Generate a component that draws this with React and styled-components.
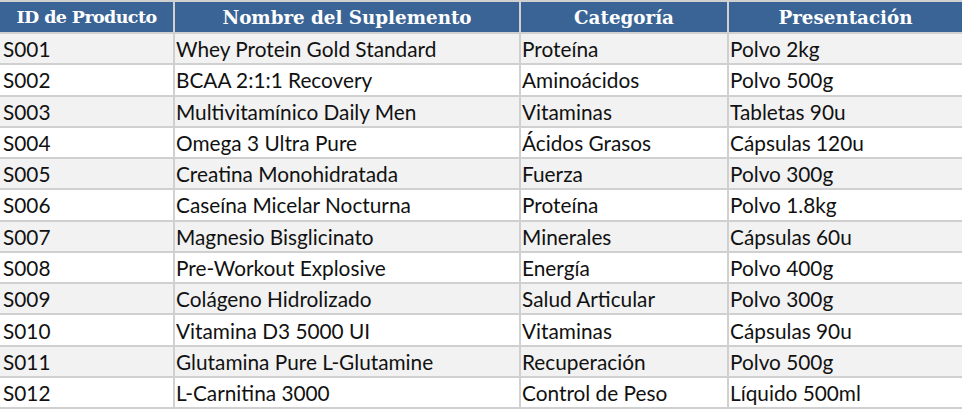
import React from 'react';
import styled, { createGlobalStyle } from 'styled-components';

const GlobalStyle = createGlobalStyle`
  body {
    margin: 0;
    background: #ffffff;
  }
`;

const products = [
  ['S001', 'Whey Protein Gold Standard', 'Proteína', 'Polvo 2kg'],
  ['S002', 'BCAA 2:1:1 Recovery', 'Aminoácidos', 'Polvo 500g'],
  ['S003', 'Multivitamínico Daily Men', 'Vitaminas', 'Tabletas 90u'],
  ['S004', 'Omega 3 Ultra Pure', 'Ácidos Grasos', 'Cápsulas 120u'],
  ['S005', 'Creatina Monohidratada', 'Fuerza', 'Polvo 300g'],
  ['S006', 'Caseína Micelar Nocturna', 'Proteína', 'Polvo 1.8kg'],
  ['S007', 'Magnesio Bisglicinato', 'Minerales', 'Cápsulas 60u'],
  ['S008', 'Pre-Workout Explosive', 'Energía', 'Polvo 400g'],
  ['S009', 'Colágeno Hidrolizado', 'Salud Articular', 'Polvo 300g'],
  ['S010', 'Vitamina D3 5000 UI', 'Vitaminas', 'Cápsulas 90u'],
  ['S011', 'Glutamina Pure L-Glutamine', 'Recuperación', 'Polvo 500g'],
  ['S012', 'L-Carnitina 3000', 'Control de Peso', 'Líquido 500ml'],
];

// the first heading is squeezed a little to fit its narrow column
const columns = [
  { title: 'ID de Producto', width: 174, size: 17.5, tight: true },
  { title: 'Nombre del Suplemento', width: 346, size: 18.3 },
  { title: 'Categoría', width: 208, size: 18.3 },
  { title: 'Presentación', width: 234, size: 18.3 },
];

export default function App() {
  return (
    <>
      <GlobalStyle />
      <Table>
        <colgroup>
          {columns.map((c) => (
            <col key={c.title} style={{ width: c.width }} />
          ))}
        </colgroup>
        <thead>
          <tr>
            {columns.map((c) => (
              <HeadCell key={c.title} $size={c.size} $tight={c.tight}>
                {c.title}
              </HeadCell>
            ))}
          </tr>
        </thead>
        <tbody>
          {products.map((row, i) => (
            <Row key={row[0]} $striped={i % 2 === 0}>
              {row.map((value, j) => (
                <Cell key={j}>{value}</Cell>
              ))}
            </Row>
          ))}
        </tbody>
      </Table>
    </>
  );
}

const Table = styled.table`
  width: 962px;
  table-layout: fixed;
  border-collapse: collapse;
  border-top: 2px solid #d0d0d0;
  border-bottom: 2px solid #d0d0d0;
`;

const HeadCell = styled.th`
  height: 30px;
  padding: 0;
  background: #3a6496;
  color: #ffffff;
  font-family: "DejaVu Serif", serif;
  font-weight: bold;
  font-size: ${(p) => p.$size}px;
  letter-spacing: ${(p) => (p.$tight ? '-0.6px' : 'normal')};
  text-align: center;
  white-space: nowrap;
  border-left: 2px solid #d0d0d0;
  &:first-child {
    border-left: none;
  }
`;

const Row = styled.tr`
  background: ${(p) => (p.$striped ? '#f2f2f2' : '#ffffff')};
`;

const Cell = styled.td`
  height: 29.27px;
  padding: 0 2px 0 1px;
  font-family: Lato, "Liberation Sans", sans-serif;
  font-size: 20.8px;
  color: #111111;
  white-space: nowrap;
  overflow: hidden;
  border-top: 2px solid #d0d0d0;
  border-left: 2px solid #d0d0d0;
  &:first-child {
    border-left: none;
    padding-left: 3px;
  }
`;
